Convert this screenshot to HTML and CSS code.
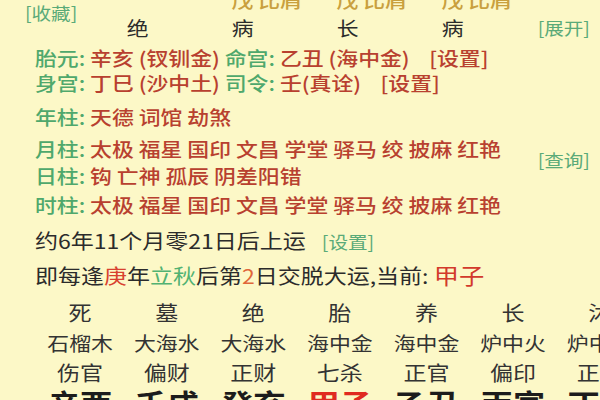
FILE: index.html
```html
<!DOCTYPE html>
<html lang="zh-CN">
<head>
<meta charset="utf-8">
<title>排盘</title>
<link rel="stylesheet" href="styles.css">
</head>
<body>
<div class="page">
  <div class="head">
    <div class="fav link">[收藏]</div>
    <span class="cg c3">戊 比肩</span>
    <span class="cg c4">戊 比肩</span>
    <span class="cg c5">戊 比肩</span>
    <span class="ds c2">绝</span>
    <span class="ds c3">病</span>
    <span class="ds c4">长</span>
    <span class="ds c5">病</span>
    <div class="expand link">[展开]</div>
  </div>

  <div class="info">
    <div class="row r1"><span class="lab">胎元:</span> <span class="red">辛亥 (钗钏金)</span> <span class="lab">命宫:</span> <span class="red">乙丑 (海中金)</span><span class="red set">[设置]</span></div>
    <div class="row r2"><span class="lab">身宫:</span> <span class="red">丁巳 (沙中土)</span> <span class="lab">司令:</span> <span class="red">壬(真诠)</span><span class="red set">[设置]</span></div>
    <div class="shensha">
      <div class="row r3"><span class="lab">年柱:</span> <span class="red">天德 词馆 劫煞</span></div>
      <div class="row r4"><span class="lab">月柱:</span> <span class="red">太极 福星 国印 文昌 学堂 驿马 绞 披麻 红艳</span></div>
      <div class="query link">[查询]</div>
      <div class="row r5"><span class="lab">日柱:</span> <span class="red">钩 亡神 孤辰 阴差阳错</span></div>
      <div class="row r6"><span class="lab">时柱:</span> <span class="red">太极 福星 国印 文昌 学堂 驿马 绞 披麻 红艳</span></div>
    </div>
    <div class="row r7 big">约6年11个月零21日后上运<span class="link set2">[设置]</span></div>
    <div class="row r8 big">即每逢<span class="hl-red">庚</span>年<span class="hl-green">立秋</span>后第<span class="hl-orange">2</span>日交脱大运,当前: <span class="cur">甲子</span></div>
  </div>

  <div class="dayun">
    <span class="cell">死</span><span class="cell">墓</span><span class="cell">绝</span><span class="cell">胎</span><span class="cell">养</span><span class="cell">长</span><span class="cell">沐</span>
    <span class="cell ny">石榴木</span><span class="cell ny">大海水</span><span class="cell ny">大海水</span><span class="cell ny">海中金</span><span class="cell ny">海中金</span><span class="cell ny">炉中火</span><span class="cell ny">炉中火</span>
    <span class="cell">伤官</span><span class="cell">偏财</span><span class="cell">正财</span><span class="cell">七杀</span><span class="cell">正官</span><span class="cell">偏印</span><span class="cell">正印</span>
    <span class="cell gz">辛酉</span><span class="cell gz">壬戌</span><span class="cell gz">癸亥</span><span class="cell gz now">甲子</span><span class="cell gz">乙丑</span><span class="cell gz">丙寅</span><span class="cell gz">丁卯</span>
  </div>
</div>
</body>
</html>
```

FILE: styles.css
```css
html, body {
  margin: 0;
  padding: 0;
  overflow: hidden;
}
body {
  width: 600px;
  height: 400px;
  background: #fcf8c7;
}
.page {
  width: 522px;
  transform: scaleX(1.15);
  transform-origin: 0 0;
  font-family: "Noto Sans CJK SC", "Noto Sans", sans-serif;
  font-size: 19px;
  font-weight: 500;
  color: #2b2b2b;
  white-space: nowrap;
}
.link { color: #5aaa78; font-weight: 400; }
.lab { color: #4fa86c; }
.red { color: #b8402f; }

/* header grid */
.head {
  display: grid;
  grid-template-columns: 74px repeat(4, 91.3px) 1fr;
  grid-template-rows: 20px 20px;
  row-gap: 8px;
  margin-top: -10px;
  line-height: 20px;
}
.fav {
  grid-column: 1;
  grid-row: 1 / 3;
  align-self: start;
  margin-top: 13px;
  margin-left: 21.7px;
  font-size: 17px;
}
.cg {
  grid-row: 1;
  color: #c9a03e;
  padding-left: 36px;
}
.ds {
  grid-row: 2;
  text-align: center;
  color: #2b2b2b;
  font-weight: 400;
}
.c2 { grid-column: 2; }
.c3 { grid-column: 3; }
.c4 { grid-column: 4; }
.c5 { grid-column: 5; }
.expand {
  grid-column: 6;
  grid-row: 2;
  justify-self: end;
  margin-right: 9px;
  font-size: 17px;
}

/* info rows */
.info {
  margin-top: 7px;
  padding-left: 30.4px;
}
.row { line-height: 25px; }
.set { margin-left: 17px; }
.r3 { margin-top: 9px; }
.r4 { margin-top: 7px; }
.r5 { margin-top: 2px; }
.r6 { margin-top: 4px; }
.r7 { margin-top: 11px; }
.r8 { margin-top: 8px; }
.big { font-size: 20px; font-weight: 400; }
.shensha {
  display: grid;
  grid-template-columns: 1fr auto;
}
.shensha .row { grid-column: 1; }
.query {
  grid-column: 2;
  grid-row: 2 / 4;
  align-self: center;
  margin-right: 9px;
  margin-top: 2px;
  font-size: 17px;
}
.set2 { margin-left: 14px; font-size: 17px; }
.hl-red { color: #d8412f; }
.hl-green { color: #52b272; }
.hl-orange { color: #e0673a; }
.cur {
  color: #d23a2c;
  font-size: 22px;
}

/* da yun table */
.dayun {
  margin-top: 10px;
  margin-left: 32px;
  display: grid;
  grid-template-columns: repeat(7, 75.3px);
  grid-auto-rows: 30px;
  line-height: 30px;
  color: #333;
  font-size: 20px;
  font-weight: 400;
}
.cell { text-align: center; }
.ny { font-size: 19px; }
.gz {
  font-size: 28px;
  font-weight: 700;
  color: #1c1c1c;
}
.now { color: #e02a20; }
```
